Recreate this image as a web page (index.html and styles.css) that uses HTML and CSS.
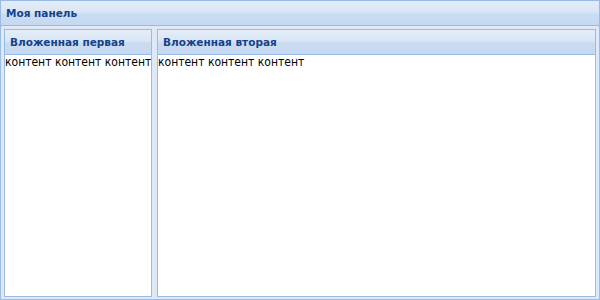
FILE: index.html
```html
<!DOCTYPE html>
<html>
<head>
<meta charset="utf-8">
<link rel="stylesheet" href="styles.css">
</head>
<body>
<div class="panel">
  <div class="header">Моя панель</div>
  <div class="main">
    <div class="sub sub-first">
      <div class="header sub-header">Вложенная первая</div>
      <div class="sub-body">контент контент контент</div>
    </div>
    <div class="sub sub-second">
      <div class="header sub-header">Вложенная вторая</div>
      <div class="sub-body">контент контент контент</div>
    </div>
  </div>
</div>
</body>
</html>
```
FILE: styles.css
```css
html, body {
  margin: 0;
  padding: 0;
  background: #ffffff;
}
.panel {
  width: 600px;
  height: 300px;
  box-sizing: border-box;
  border: 1px solid #99bbe8;
  display: flex;
  flex-direction: column;
  background: #dfe8f6;
}
.header {
  height: 25px;
  box-sizing: border-box;
  padding: 6px 3px 0 5px;
  border-bottom: 1px solid #99bbe8;
  background: linear-gradient(#e4edf8 0%, #d9e6f6 45%, #cadcf2 55%, #c6d9f1 100%);
  font-family: "DejaVu Sans", Verdana, sans-serif;
  font-weight: bold;
  font-size: 10.5px;
  line-height: 13px;
  color: #15428b;
  flex: none;
}
.main {
  flex: 1;
  display: flex;
  gap: 5px;
  padding: 3px 3px 2px 3px;
  min-height: 0;
}
.sub {
  display: flex;
  flex-direction: column;
  border: 1px solid #99bbe8;
  background: #ffffff;
}
.sub-first {
  width: 148px;
  box-sizing: border-box;
}
.sub-second {
  flex: 1;
}
.sub-header {
  height: 25px;
  padding-top: 6px;
}
.sub-body {
  flex: 1;
  font-family: "DejaVu Sans Condensed", "DejaVu Sans", sans-serif;
  font-size: 12px;
  line-height: 15px;
  color: #000000;
  white-space: nowrap;
  overflow: hidden;
}
```
